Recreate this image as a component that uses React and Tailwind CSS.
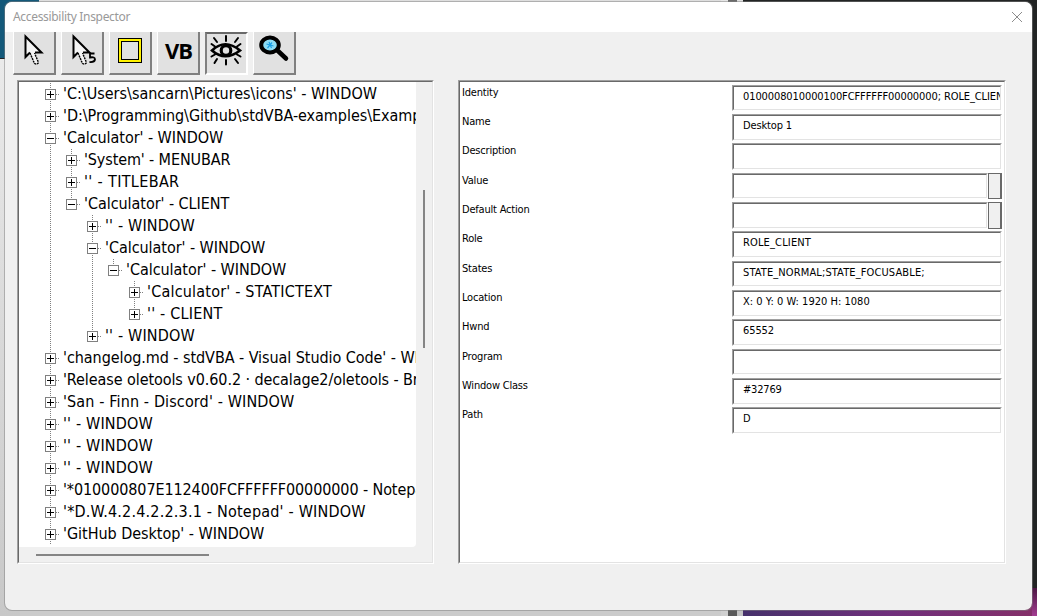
import React from "react";

const rows = [
  { t: "'C:\\Users\\sancarn\\Pictures\\icons' - WINDOW", g: "+" },
  { t: "'D:\\Programming\\Github\\stdVBA-examples\\Examples' - WINDOW", g: "+", s: "tracking-[-0.04px]" },
  { t: "'Calculator' - WINDOW", g: "-", s: "tracking-[-0.05px]" },
  { t: "'System' - MENUBAR", g: "|+", s: "tracking-[-0.12px]" },
  { t: "'' - TITLEBAR", g: "|+", s: "tracking-[0.35px]" },
  { t: "'Calculator' - CLIENT", g: "|_", s: "tracking-[-0.05px]" },
  { t: "'' - WINDOW", g: "| +", s: "tracking-[0.15px]" },
  { t: "'Calculator' - WINDOW", g: "| -", s: "tracking-[-0.05px]" },
  { t: "'Calculator' - WINDOW", g: "| |_", s: "tracking-[-0.05px]" },
  { t: "'Calculator' - STATICTEXT", g: "| | +", s: "tracking-[0.2px]" },
  { t: "'' - CLIENT", g: "| | L", s: "tracking-[0.2px]" },
  { t: "'' - WINDOW", g: "| L", s: "tracking-[0.15px]" },
  { t: "'changelog.md - stdVBA - Visual Studio Code' - WINDOW", g: "+", s: "tracking-[-0.06px]" },
  { t: "'Release oletools v0.60.2 · decalage2/oletools - Brave' - WINDOW", g: "+", s: "tracking-[-0.08px]" },
  { t: "'San - Finn - Discord' - WINDOW", g: "+", s: "tracking-[0.13px]" },
  { t: "'' - WINDOW", g: "+", s: "tracking-[0.15px]" },
  { t: "'' - WINDOW", g: "+", s: "tracking-[0.15px]" },
  { t: "'' - WINDOW", g: "+", s: "tracking-[0.15px]" },
  { t: "'*010000807E112400FCFFFFFF00000000 - Notepad' - WINDOW", g: "+", s: "tracking-[-0.1px]" },
  { t: "'*D.W.4.2.4.2.2.3.1 - Notepad' - WINDOW", g: "+", s: "tracking-[0.2px]" },
  { t: "'GitHub Desktop' - WINDOW", g: "+", s: "tracking-[-0.03px]" },
];

const vdots = "bg-[repeating-linear-gradient(to_bottom,#808080_0_1px,transparent_1px_2px)]";
const hdots = "bg-[repeating-linear-gradient(to_right,#808080_0_1px,transparent_1px_2px)]";

// Guide kinds: "|" line only, " " empty, "+"/"-" continuing node, "L"/"_" last sibling
function Guide({ kind }) {
  if (kind === " ") return <span className="w-[21px] shrink-0" />;
  const node = kind !== "|";
  const last = kind === "L" || kind === "_";
  const plus = kind === "+" || kind === "L";
  return (
    <span className="grid h-[22px] w-[21px] shrink-0">
      <span className={`col-start-1 row-start-1 ml-[10px] w-px ${last ? "h-[11px]" : "h-[22px]"} ${vdots}`} />
      {node && <span className={`col-start-1 row-start-1 mt-[11px] ml-[16px] h-px w-[4px] ${hdots}`} />}
      {node && (
        <svg className="col-start-1 row-start-1 mt-[6px] ml-[5px]" width="11" height="11" shapeRendering="crispEdges">
          <rect x="0.5" y="0.5" width="10" height="10" fill="#fff" stroke="#808080" />
          <path d={plus ? "M2 5.5H9M5.5 2V9" : "M2 5.5H9"} stroke="#000" />
        </svg>
      )}
    </span>
  );
}

const fields = [
  { label: "Identity", value: "0100008010000100FCFFFFFF00000000; ROLE_CLIENT", s: "tracking-[-0.1px] leading-[20px]" },
  { label: "Name", value: "Desktop 1", s: "tracking-[-0.15px]" },
  { label: "Description", value: "" },
  { label: "Value", value: "", more: true },
  { label: "Default Action", value: "", more: true },
  { label: "Role", value: "ROLE_CLIENT", s: "tracking-[0.15px]" },
  { label: "States", value: "STATE_NORMAL;STATE_FOCUSABLE;", s: "tracking-[0.12px]" },
  { label: "Location", value: "X: 0 Y: 0 W: 1920 H: 1080", s: "tracking-[0.02px]" },
  { label: "Hwnd", value: "65552", s: "tracking-[-0.1px]" },
  { label: "Program", value: "" },
  { label: "Window Class", value: "#32769", s: "tracking-[-0.2px]" },
  { label: "Path", value: "D" },
];

const sunken =
  "border border-t-[#a0a0a0] border-l-[#a0a0a0] border-r-white border-b-white";
const sunkenInner =
  "border border-t-[#696969] border-l-[#696969] border-r-[#e3e3e3] border-b-[#e3e3e3]";

function ToolButton({ pressed, children }) {
  return (
    <button
      className={`flex h-[43px] w-[43px] items-start bg-[#e1e1e1] ${
        pressed
          ? "border-2 border-t-[#696969] border-l-[#808080] border-r-white border-b-white"
          : "border-r-2 border-b-2 border-l border-l-white border-r-[#808080] border-b-[#808080]"
      }`}
    >
      {children}
    </button>
  );
}

function Pointer({ five }) {
  return (
    <svg width="38" height="38" viewBox="0 0 38 38" className="-ml-px">
      <path d="M12 4V25L17 20L21.5 31.5Q23.5 33 25.5 31L21.5 20.5H28.5Z" fill="#f4f4f4" />
      <path d="M17 20.5L12.5 25V4.5L28.5 20.5H22" fill="none" stroke="#000" strokeWidth="2" />
      <path d="M17 21L21.5 31.5Q24 33 25.5 30.5L21.5 21" fill="none" stroke="#000" strokeWidth="1.4" strokeDasharray="2 0.8" />
      {five && <path d="M33.5 21.5H29V25.5Q34 24.5 34 27.5Q33.5 30.5 28.5 30" fill="none" stroke="#000" strokeWidth="1.8" />}
    </svg>
  );
}

export default function App() {
  return (
    <div className="relative h-[616px] w-[1037px] overflow-hidden bg-[#cbcbcb] font-['DejaVu_Sans_Condensed','DejaVu_Sans',sans-serif] text-black">
      <div className="absolute inset-y-0 left-0 w-5 bg-gradient-to-b from-[#eeeeee] to-[#c8c8c8]" />
      <div className="absolute top-0 left-0 h-[59px] w-[39px] border-b border-[#222] bg-[#14597a]" />
      <div className="absolute top-0 left-[39px] h-4 w-[689px] bg-[#dedede]" />
      <div className="absolute top-0 right-0 flex h-[588px] w-[316px]">
        <div className="w-[7px] bg-[#e6e6e6]" />
        <div className="w-[9px] bg-[#6a6a6a]" />
        <div className="w-[6px] bg-[#e0e0e0]" />
        <div className="flex-1 bg-[#222424]" />
      </div>
      <div className="absolute right-0 bottom-0 flex h-[28px] w-[316px]">
        <div className="w-[7px] bg-[#d0d0d0]" />
        <div className="w-[9px] bg-[#5a5a5a]" />
        <div className="w-[6px] bg-[#c2c2c2]" />
        <div className="flex-1 bg-gradient-to-r from-[#46306b] via-[#702f7c] to-[#852f68]" />
      </div>
      <div className="absolute top-[588px] right-0 h-7 w-[5px] bg-gradient-to-b from-[#4d1644] to-[#a33d91]" />

      <main className="absolute top-px left-[4px] flex h-[610px] w-[1029px] flex-col overflow-hidden rounded-lg border border-[rgba(128,128,128,0.5)] bg-[#f0f0f0] bg-clip-padding">
        <header className="flex h-[30px] shrink-0 items-center justify-between bg-white pr-[9px] pl-[8px]">
          <h1 className="font-['Noto_Sans',sans-serif] text-[12px] tracking-[-0.32px] text-[#999]">Accessibility Inspector</h1>
          <svg width="12" height="12" viewBox="0 0 12 12">
            <path d="M1 1L11 11M11 1L1 11" stroke="#8c8c8c" strokeWidth="1" />
          </svg>
        </header>

        <nav className="flex shrink-0 gap-[5px] pl-[8px]">
          <ToolButton><Pointer /></ToolButton>
          <ToolButton><Pointer five /></ToolButton>
          <ToolButton>
            <svg width="25" height="25" viewBox="0 0 25 25" className="mt-[6px] ml-[8px]" shapeRendering="crispEdges">
              <path d="M0.5 0.5H23.5V24.5H0.5Z M3.5 3.5H20.5V21.5H3.5Z" fill="#fff200" fillRule="evenodd" stroke="#000" />
            </svg>
          </ToolButton>
          <ToolButton>
            <span className="mt-[7px] ml-[7px] font-['Open_Sans',sans-serif] text-[22px] leading-[22px] font-bold tracking-[-1px]">VB</span>
          </ToolButton>
          <ToolButton pressed>
            <svg width="34" height="34" viewBox="0 0 34 34" className="-mt-px ml-[2px]" fill="none" stroke="#000" strokeLinecap="round">
              <path d="M3 17.5Q16 5 31 17.5Q16 29 3 17.5Z" strokeWidth="2.6" />
              <circle cx="17" cy="17.5" r="4.8" strokeWidth="3.2" />
              <path d="M17 3V8M17 27V31.5M5 5L8 9M29 5L26 9M2.5 11L6 13.5M31.5 11L28 13.5M2.5 23.5L6 21.5M31.5 23.5L28 21.5M5.5 30L8 26M29 30L26 26" strokeWidth="2" />
            </svg>
          </ToolButton>
          <ToolButton>
            <svg width="34" height="34" viewBox="0 0 34 34" className="ml-[3px]">
              <ellipse cx="13" cy="13" rx="8.8" ry="7.5" fill="#8bdcf4" stroke="#000" strokeWidth="4" />
              <path d="M20.500 18.500L29 26.500" stroke="#000" strokeWidth="4.5" strokeLinecap="round" />
              <path d="M9.5 12L16.5 14M10.5 16L15 10.5M12 10L14.5 16" stroke="#18a0e8" strokeWidth="1.2" />
            </svg>
          </ToolButton>
        </nav>

        <div className="mt-[5px] flex gap-[24px] pl-[12px]">
          <section className={`h-[484px] w-[417px] shrink-0 ${sunken}`}>
            <div className={`flex h-full flex-col ${sunkenInner}`}>
              <div className="flex h-[465px] shrink-0">
                <ul className="w-[397px] overflow-hidden rounded-br bg-white pt-px pl-[21px]">
                  {rows.map((r, i) => (
                    <li key={i} className="flex h-[22px] items-start whitespace-nowrap">
                      {r.g.split("").map((k, j) => (
                        <Guide key={j} kind={k} />
                      ))}
                      <span className={`pl-[2px] text-[16px] leading-[22px] ${r.s || ""}`}>{r.t}</span>
                    </li>
                  ))}
                </ul>
                <div className="mt-[108px] ml-[7px] h-[158px] w-[2px] bg-[#858585]" />
              </div>
              <div className="mt-[7px] ml-[17px] h-[2px] w-[173px] bg-[#858585]" />
            </div>
          </section>

          <section className={`h-[484px] w-[548px] shrink-0 ${sunken}`}>
            <div className={`h-full bg-white pt-[3px] pl-[2px] ${sunkenInner}`}>
              {fields.map(({ label, value, more, s }, i) => (
                <div key={label} className={`flex items-start ${i % 3 === 2 ? "h-[30px]" : "h-[29px]"}`}>
                  <label className="w-[270px] shrink-0 text-[11px] leading-[15px] tracking-[-0.2px]">{label}</label>
                  <div className={`${i % 3 === 0 ? "h-[26px]" : "h-[27px]"} ${more ? "w-[256px]" : "w-[270px]"} shrink-0 ${sunken}`}>
                    <div className={`h-full overflow-hidden pl-[9px] text-[11px] whitespace-nowrap ${i === 0 ? "" : "leading-[19px]"} ${s || ""} ${sunkenInner}`}>
                      {value}
                    </div>
                  </div>
                  {more && <div className={`${i % 3 === 0 ? "h-[26px]" : "h-[27px]"} w-[14px] border border-r-2 border-[#696969] bg-[#f0f0f0]`} />}
                </div>
              ))}
            </div>
          </section>
        </div>
      </main>
    </div>
  );
}
